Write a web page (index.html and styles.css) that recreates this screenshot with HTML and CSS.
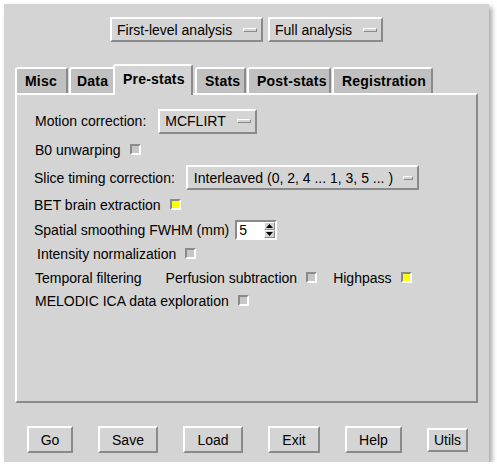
FILE: index.html
```html
<!DOCTYPE html>
<html>
<head>
<meta charset="utf-8">
<link rel="stylesheet" href="styles.css">
</head>
<body>
<div class="window">
  <div class="topbar">
    <div class="menubtn mb-level"><span class="mb-text">First-level analysis</span><span class="ind"></span></div>
    <div class="menubtn mb-full"><span class="mb-text">Full analysis</span><span class="ind"></span></div>
  </div>

  <div class="tabs">
    <div class="tab t-misc">Misc</div>
    <div class="tab t-data">Data</div>
    <div class="tab sel t-pre">Pre-stats</div>
    <div class="tab t-stats">Stats</div>
    <div class="tab t-post">Post-stats</div>
    <div class="tab t-reg">Registration</div>
  </div>

  <div class="panel">
    <div class="row r1">
      <span class="lbl">Motion correction:</span>
      <div class="menubtn mb-mc"><span class="mb-text">MCFLIRT</span><span class="ind"></span></div>
    </div>
    <div class="row r2">
      <span class="lbl">B0 unwarping</span><span class="chk"></span>
    </div>
    <div class="row r3">
      <span class="lbl l-slice">Slice timing correction:</span>
      <div class="menubtn mb-slice"><span class="mb-text">Interleaved (0, 2, 4 ... 1, 3, 5 ... )</span><span class="ind"></span></div>
    </div>
    <div class="row r4">
      <span class="lbl l-bet">BET brain extraction</span><span class="chk on"></span>
    </div>
    <div class="row r5">
      <span class="lbl l-spatial">Spatial smoothing FWHM (mm)</span>
      <div class="spin">
        <span class="spin-val">5</span>
        <span class="arrows">
          <span class="arr"><svg width="7" height="4" viewBox="0 0 7 4"><polygon points="0,4 3.5,0 7,4" fill="#000"/></svg></span>
          <span class="arr"><svg width="7" height="4" viewBox="0 0 7 4"><polygon points="0,0 3.5,4 7,0" fill="#000"/></svg></span>
        </span>
      </div>
    </div>
    <div class="row r6">
      <span class="lbl l-int">Intensity normalization</span><span class="chk"></span>
    </div>
    <div class="row r7">
      <span class="lbl">Temporal filtering</span>
      <span class="lbl l-perf">Perfusion subtraction</span><span class="chk"></span>
      <span class="lbl l-hp">Highpass</span><span class="chk on"></span>
    </div>
    <div class="row r8">
      <span class="lbl">MELODIC ICA data exploration</span><span class="chk"></span>
    </div>
  </div>

  <div class="buttons">
    <div class="btn b-go">Go</div>
    <div class="btn b-save">Save</div>
    <div class="btn b-load">Load</div>
    <div class="btn b-exit">Exit</div>
    <div class="btn b-help">Help</div>
    <div class="btn b-utils">Utils</div>
  </div>
</div>
</body>
</html>
```

FILE: styles.css
```css
html, body {
  margin: 0;
  padding: 0;
  background: #ffffff;
}
body {
  font-family: "Liberation Sans", Arial, Helvetica, sans-serif;
  font-size: 14px;
  color: #000;
}
.window {
  margin: 4px 0 0 4px;
  width: 485px;
  height: 458px;
  background: #d4d4d4;
  box-shadow: 3px 3px 5px rgba(0,0,0,0.35);
  display: flex;
  flex-direction: column;
  box-sizing: border-box;
}
.topbar {
  margin-top: 13px;
  height: 25px;
  display: flex;
  justify-content: center;
  gap: 5px;
}
.menubtn {
  box-sizing: border-box;
  height: 25px;
  border: 2px solid;
  border-color: #ffffff #8a8a8a #8a8a8a #ffffff;
  background: #d4d4d4;
  display: flex;
  align-items: center;
  padding: 0 4px 0 5px;
  white-space: nowrap;
}
.mb-text {
  flex: 1;
  line-height: 16px;
}
.ind {
  width: 14px;
  height: 4px;
  box-sizing: border-box;
  border: 1px solid;
  border-color: #ffffff #8a8a8a #8a8a8a #ffffff;
  background: #d4d4d4;
  margin-left: 10px;
}
.mb-level { width: 153px; }
.mb-full { width: 115px; }

.tabs {
  margin-top: 22px;
  margin-left: 11px;
  height: 29px;
  display: flex;
  align-items: flex-end;
  position: relative;
  z-index: 2;
}
.tab {
  box-sizing: border-box;
  height: 26px;
  border: 2px solid;
  border-bottom: 0;
  border-color: #ffffff #8a8a8a #ffffff #ffffff;
  border-radius: 3px 3px 0 0;
  background: #c0c0c0;
  font-weight: bold;
  letter-spacing: 0.2px;
  padding: 4px 0 0 8px;
  white-space: nowrap;
  overflow: hidden;
  line-height: 16px;
}
.tab.sel {
  height: 31px;
  margin-bottom: -2px;
  background: #d4d4d4;
  padding: 5px 0 0 8px;
  position: relative;
  z-index: 3;
}
.t-misc { width: 53px; margin-right: 1px; }
.t-data { width: 46px; padding-left: 6px; }
.t-pre { width: 80px; margin-left: -2px; margin-right: 2px; }
.t-stats { width: 51px; margin-right: 1px; }
.t-post { width: 84px; margin-right: 1px; }
.t-reg { width: 101px; }

.panel {
  box-sizing: border-box;
  margin-left: 11px;
  width: 463px;
  height: 310px;
  border: 2px solid;
  border-color: #ffffff #8a8a8a #8a8a8a #ffffff;
  padding: 12px 0 0 18px;
  display: flex;
  flex-direction: column;
  position: relative;
  z-index: 1;
}
.row {
  display: flex;
  align-items: center;
  white-space: nowrap;
}
.r1 { height: 28px; }
.r2 { height: 29px; }
.r3 { height: 27px; }
.r4 { height: 27px; }
.r5 { height: 23px; }
.r6 { height: 25px; }
.r7 { height: 23px; }
.r8 { height: 23px; }

.lbl { line-height: 16px; }
.l-slice { margin-left: -1px; }
.l-bet { margin-left: -1px; }
.l-spatial { margin-left: -1px; }
.l-int { margin-left: 2px; }
.l-perf { margin-left: 24px; }
.l-hp { margin-left: 16px; }

.mb-mc { width: 99px; margin-left: 12px; height: 25px; }
.mb-slice { width: 233px; margin-left: 11px; height: 25px; padding-left: 6px; }

.chk {
  display: inline-block;
  box-sizing: border-box;
  width: 11px;
  height: 11px;
  border: 2px solid;
  border-color: #8a8a8a #ffffff #ffffff #8a8a8a;
  background: #c6c6c6;
  margin-left: 9px;
}
.chk.on { background: #ffff00; }

.spin {
  box-sizing: border-box;
  margin-left: 6px;
  width: 42px;
  height: 20px;
  border: 2px solid;
  border-color: #8a8a8a #ffffff #ffffff #8a8a8a;
  background: #ffffff;
  display: flex;
  align-items: stretch;
}
.spin-val {
  flex: 1;
  padding-left: 2px;
  line-height: 16px;
}
.arrows {
  width: 11px;
  display: flex;
  flex-direction: column;
}
.arr {
  flex: 1;
  box-sizing: border-box;
  border: 1px solid;
  border-color: #ffffff #8a8a8a #8a8a8a #ffffff;
  background: #d4d4d4;
  display: flex;
  align-items: center;
  justify-content: center;
}
.arr svg { display: block; }

.buttons {
  margin-top: 23px;
  margin-left: 23px;
  display: flex;
  align-items: center;
  gap: 25px;
}
.btn {
  box-sizing: border-box;
  height: 27px;
  border: 2px solid;
  border-color: #ffffff #8a8a8a #8a8a8a #ffffff;
  background: #d4d4d4;
  display: flex;
  align-items: center;
  justify-content: center;
  line-height: 16px;
}
.b-go { width: 46px; }
.b-save { width: 60px; }
.b-load { width: 60px; }
.b-exit { width: 52px; }
.b-help { width: 57px; }
.b-utils { width: 41px; height: 24px; }
```
